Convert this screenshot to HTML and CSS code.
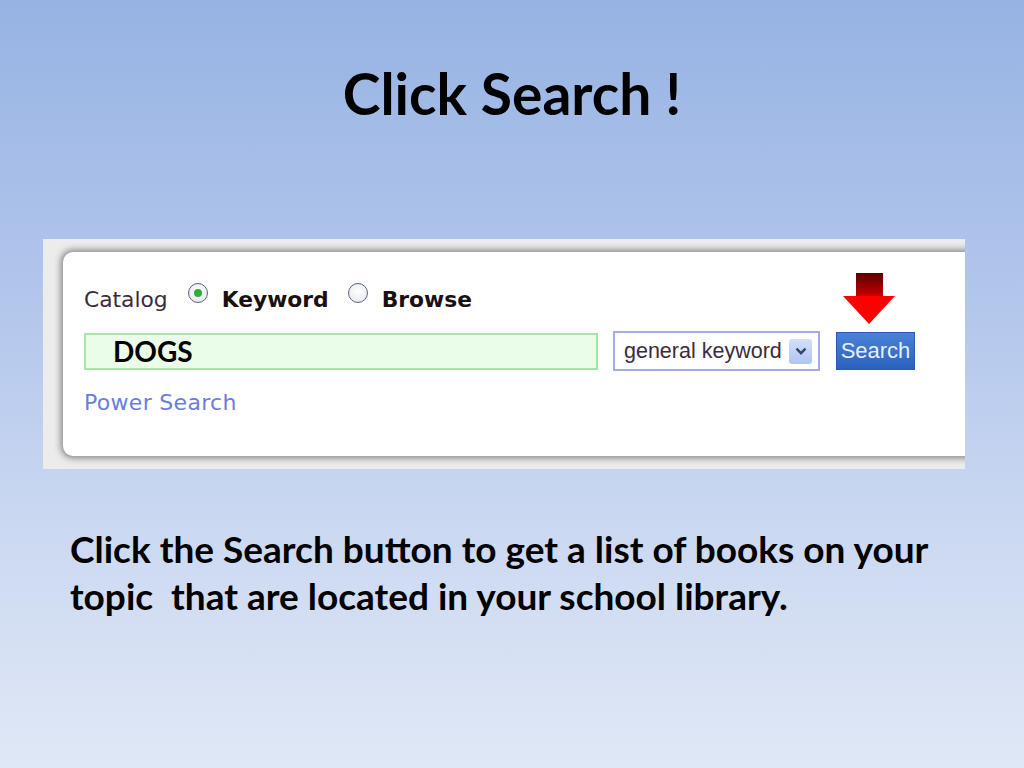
FILE: index.html
```html
<!DOCTYPE html>
<html lang="en">
<head>
  <meta charset="UTF-8" />
  <title>Click Search !</title>
  <link rel="stylesheet" href="styles.css">
</head>
<body>

<div class="slide">
  <h1 class="title">Click Search !</h1>

  <!-- screenshot of the catalog search box -->
  <div class="shot">
    <div class="card">
      <div class="row-mode">
        <span class="label">Catalog</span>
        <span class="radio checked"></span>
        <span class="mode">Keyword</span>
        <span class="radio"></span>
        <span class="mode">Browse</span>
      </div>

      <div class="row-search">
        <div class="query">DOGS</div>
        <div class="select">
          <span>general keyword</span>
          <span class="drop">
            <svg viewBox="0 0 10 8" width="12" height="9"><path d="M1 1.5 L5 5.5 L9 1.5" fill="none" stroke="#34466e" stroke-width="2.2"/></svg>
          </span>
        </div>
        <div class="btn-wrap">
          <svg class="arrow" viewBox="0 0 52 51" width="52" height="51">
            <defs>
              <linearGradient id="shaft" x1="0" y1="0" x2="0" y2="1">
                <stop offset="0" stop-color="#5a0000"/>
                <stop offset="1" stop-color="#d00000"/>
              </linearGradient>
            </defs>
            <rect x="13" y="0" width="27" height="25" fill="url(#shaft)"/>
            <polygon points="0,23 52,23 26,51" fill="#ff0000"/>
          </svg>
          <button class="search-btn" type="button">Search</button>
        </div>
      </div>

      <a class="power" href="#">Power Search</a>
    </div>
  </div>

  <p class="note">Click the Search button to get a list of books on your topic&nbsp; that are located in your school library.</p>
</div>

</body>
</html>
```

FILE: styles.css
```css
body {
  margin: 0;
  font-family: Lato, 'Open Sans', sans-serif;
}

.slide {
  width: 1024px;
  height: 768px;
  overflow: hidden;
  padding-top: 63px;
  box-sizing: border-box;
  background: linear-gradient(to bottom, #97b3e3 0%, #b3c7ec 40%, #ccd9f1 70%, #e0e8f6 100%);
}

.title {
  margin: 0;
  text-align: center;
  font-size: 57px;
  line-height: 60px;
  font-weight: 700;
  color: #000;
}

/* ---- screenshot panel ---- */
.shot {
  margin: 116px 0 0 43px;
  width: 922px;
  height: 230px;
  padding: 13px 0 0 20px;
  box-sizing: border-box;
  background: #ececec;
  overflow: hidden;
}

.card {
  width: 960px;
  height: 204px;
  box-sizing: border-box;
  padding: 34px 0 0 21px;
  background: #fff;
  border-radius: 10px 0 0 10px;
  box-shadow: 0 0 0 1px #a8a8a8, 0 0 7px 2px rgba(0,0,0,0.45);
  font-family: 'DejaVu Sans', Verdana, sans-serif;
}

.row-mode {
  display: flex;
  align-items: center;
  height: 26px;
  font-size: 21.8px;
  color: #3a2c3c;
}

.label {
  margin-right: 20px;
}

.mode {
  font-weight: bold;
  color: #1a1010;
  margin-right: 19px;
}

.radio {
  width: 18px;
  height: 18px;
  border-radius: 50%;
  border: 1px solid #59647a;
  background: radial-gradient(circle at 50% 40%, #fff 0, #e2e4e8 100%);
  margin-right: 14px;
  margin-top: -12px;
  position: relative;
}

.radio.checked::after {
  content: "";
  position: absolute;
  left: 5px;
  top: 5px;
  width: 8px;
  height: 8px;
  border-radius: 50%;
  background: #2fae3a;
}

.row-search {
  display: flex;
  align-items: center;
  height: 40px;
  margin-top: 19px;
}

.query {
  width: 514px;
  height: 37px;
  box-sizing: border-box;
  border: 2px solid #a8e4a8;
  background: #e9fde9;
  padding-left: 27px;
  font-family: Lato, sans-serif;
  font-weight: 700;
  font-size: 28px;
  line-height: 33px;
  color: #000;
}

.select {
  margin-left: 15px;
  width: 207px;
  height: 40px;
  box-sizing: border-box;
  border: 2px solid #a3a9ea;
  background: #fff;
  display: flex;
  align-items: center;
  justify-content: space-between;
  padding: 0 6px 0 9px;
  font-family: 'Liberation Sans', Arial, sans-serif;
  font-size: 21.5px;
  color: #3a2c3c;
}

.drop {
  width: 23px;
  height: 25px;
  border-radius: 3px;
  background: linear-gradient(to bottom, #d3e0fb, #aec4f2);
  display: flex;
  align-items: center;
  justify-content: center;
}

.btn-wrap {
  margin-left: 16px;
  position: relative;
}

.arrow {
  position: absolute;
  left: 7px;
  top: -59px;
}

.search-btn {
  display: block;
  width: 79px;
  height: 38px;
  border: 1px solid #2a5aa8;
  background: linear-gradient(to bottom, #4a82d8, #2c62bc);
  color: #e6eeff;
  font-family: 'Liberation Sans', Arial, sans-serif;
  font-size: 22px;
  padding: 0;
}

.power {
  display: block;
  width: fit-content;
  margin-top: 19px;
  font-size: 22px;
  letter-spacing: 0.3px;
  color: #6b7ddc;
  text-decoration: none;
}

/* ---- caption ---- */
.note {
  margin: 56px 0 0 70px;
  width: 900px;
  font-size: 37px;
  line-height: 47px;
  font-weight: 700;
  color: #000;
}
```
